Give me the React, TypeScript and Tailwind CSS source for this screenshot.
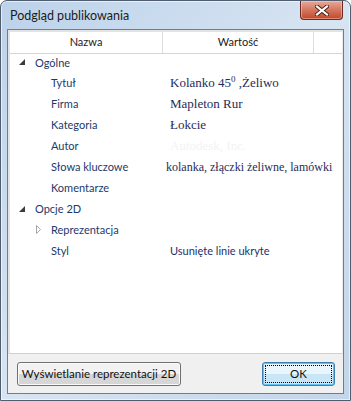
import React from 'react';

interface Row {
  label: string;
  value?: React.ReactNode;
  level: 0 | 1;
  expander?: 'open' | 'closed';
  valueClass?: string;
}

const serif = "font-['Liberation_Serif','Times_New_Roman',serif] text-[13px] text-[#1f2d58]";
const sans = "font-['Lato','Segoe_UI',sans-serif] text-[11px]";

const rows: Row[] = [
  { label: 'Ogólne', level: 0, expander: 'open' },
  {
    label: 'Tytuł',
    level: 1,
    value: (
      <span>
        Kolanko 45<span className="text-[9px] relative -top-[5px] leading-none">0</span> ,Żeliwo
      </span>
    ),
    valueClass: serif + ' pl-[7px]',
  },
  { label: 'Firma', level: 1, value: 'Mapleton Rur', valueClass: serif + ' pl-[7px]' },
  { label: 'Kategoria', level: 1, value: 'Łokcie', valueClass: serif + ' pl-[7px]' },
  { label: 'Autor', level: 1, value: 'Autodesk, Inc.', valueClass: serif + ' pl-[7px] !text-[#f3f3f3]' },
  {
    label: 'Słowa kluczowe',
    level: 1,
    value: 'kolanka, złączki żeliwne, lamówki',
    valueClass: serif + ' pl-[3px] !text-[12px]',
  },
  { label: 'Komentarze', level: 1 },
  { label: 'Opcje 2D', level: 0, expander: 'open' },
  { label: 'Reprezentacja', level: 1, expander: 'closed' },
  {
    label: 'Styl',
    level: 1,
    value: 'Usunięte linie ukryte',
    valueClass: sans + ' pl-[7px] text-[#1e2f6b]',
  },
];

function OpenArrow() {
  return (
    <svg width="6" height="6" viewBox="0 0 6 6" className="block">
      <polygon points="6,0 6,6 0,6" fill="#3b3b3b" />
    </svg>
  );
}

function ClosedArrow() {
  return (
    <svg width="5" height="9" viewBox="0 0 5 9" className="block">
      <polygon points="0.5,0.5 4.5,4.5 0.5,8.5" fill="#fff" stroke="#a6a6a6" strokeWidth="1" />
    </svg>
  );
}

function CloseButton() {
  return (
    <div className="absolute right-[7px] top-0 w-[43px] h-[19px] rounded-b-[4px] border border-t-0 border-[#6b2b22] bg-gradient-to-b from-[#e6a99a] via-[#d3765f] to-[#c2462a] flex items-center justify-center shadow-[inset_0_0_0_1px_rgba(255,220,210,0.45)]">
      <svg width="14" height="11" viewBox="0 0 14 11">
        <path d="M2 1.5 L12 9.5 M12 1.5 L2 9.5" stroke="#4a1a12" strokeWidth="4" strokeLinecap="square" />
        <path d="M2 1.5 L12 9.5 M12 1.5 L2 9.5" stroke="#ffffff" strokeWidth="2.2" strokeLinecap="square" />
      </svg>
    </div>
  );
}

export default function App() {
  return (
    <div className="w-[351px] h-[401px] bg-white">
      <div className="relative w-[351px] h-[401px] rounded-t-[7px] border border-[#4f5d6e] bg-gradient-to-br from-[#bcd2ea] via-[#d7e4f2] to-[#c3d5ea] flex flex-col shadow-[inset_0_0_0_1px_rgba(255,255,255,0.6)]">
        <div className={`h-[28px] flex items-center pl-[9px] pt-[2px] font-['Lato','Segoe_UI',sans-serif] text-[12.5px] text-[#1b1b1b]`}>
          Podgląd publikowania
        </div>
        <CloseButton />

        <div className="mx-[6px] mb-[6px] flex-1 flex flex-col border border-[#6e7d8f] bg-[#f0f0f0]">
          <div className="flex-1 bg-white border-l-2 border-t-2 border-[#e3e3e3] border-r border-r-[#eaeaea] border-b border-b-[#d0d0d0] flex flex-col">
            <div className={`flex h-[22px] border-b border-[#d5d5d5] ${sans} text-[#1b1b1b]`}>
              <div className="w-[153px] flex items-center justify-center border-r border-[#dedede]">Nazwa</div>
              <div className="w-[151px] flex items-center justify-center border-r border-[#dedede]">Wartość</div>
              <div className="flex-1" />
            </div>
            <div className="-mt-[2px]">
              {rows.map((r, i) => (
                <div
                  key={r.label}
                  className={`flex items-center leading-none ${i === 0 ? 'h-[20px]' : 'h-[21px]'}`}
                >
                  <div className="w-[153px] flex items-center">
                    <div className={r.level === 0 ? 'w-[25px] pl-[9px]' : 'w-[25px]'}>
                      {r.level === 0 && r.expander === 'open' && <OpenArrow />}
                    </div>
                    {r.level === 1 && (
                      <div className="w-[16px] pl-[1px]">{r.expander === 'closed' && <ClosedArrow />}</div>
                    )}
                    <span className={`${sans} text-[#1c3a6b]`}>{r.label}</span>
                  </div>
                  <div className={`flex-1 whitespace-nowrap ${r.valueClass ?? ''}`}>{r.value}</div>
                </div>
              ))}
            </div>
          </div>

          <div className="h-[39px] flex items-center justify-between pl-[9px] pr-[8px]">
            <button
              className={`h-[24px] w-[164px] whitespace-nowrap rounded-[3px] border border-[#707070] bg-gradient-to-b from-[#f2f2f2] from-50% to-[#d6d6d6] to-50% shadow-[inset_0_0_0_1px_#fbfbfb] font-['Lato','Segoe_UI',sans-serif] text-[11.5px] text-[#111]`}
            >
              Wyświetlanie reprezentacji 2D
            </button>
            <button
              className={`h-[24px] w-[73px] rounded-[3px] border border-[#3c7fb1] bg-gradient-to-b from-[#eaf6fd] from-50% to-[#c9e6f7] to-50% shadow-[inset_0_0_0_1px_#5ec3f0] p-[2px] font-['Lato','Segoe_UI',sans-serif] text-[11.5px] text-[#111]`}
            >
              <div className="w-full h-full border border-dotted border-black flex items-center justify-center">OK</div>
            </button>
          </div>
        </div>
      </div>
    </div>
  );
}
